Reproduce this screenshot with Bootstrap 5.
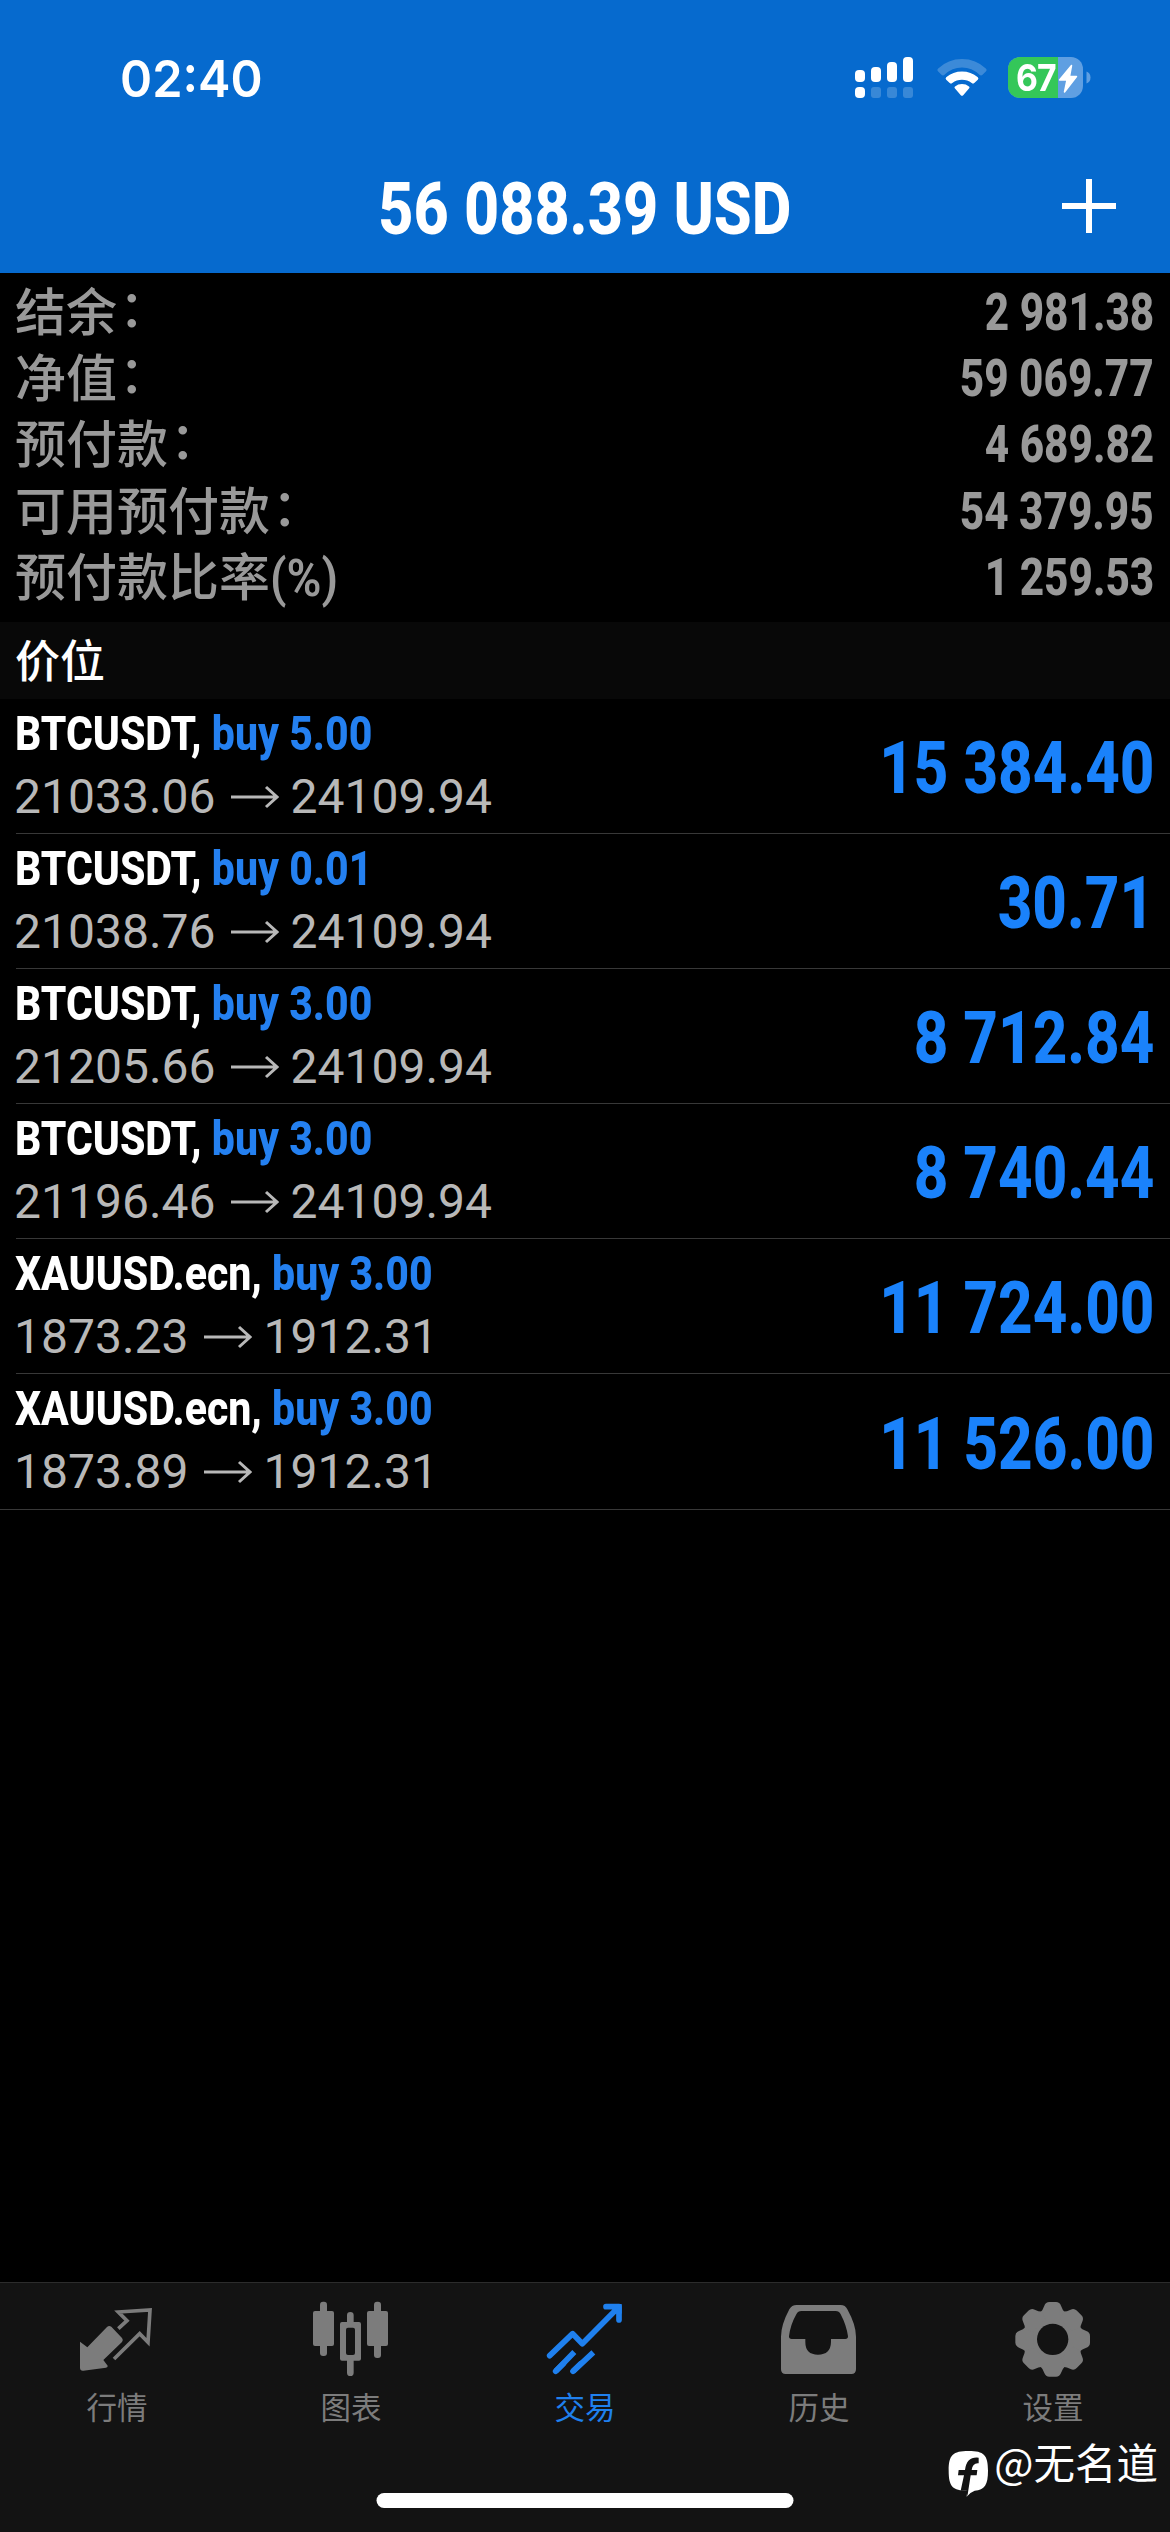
<!DOCTYPE html>
<html lang="zh-CN">
<head>
<meta charset="utf-8">
<meta name="viewport" content="width=device-width, initial-scale=1">
<title>交易</title>
<link href="https://cdn.jsdelivr.net/npm/bootstrap@5.3.0/dist/css/bootstrap.min.css" rel="stylesheet">
<style>
body{background:#000;color:#fff;font-family:Roboto,"Noto Sans CJK SC",sans-serif;overflow:hidden}
.screen{width:1170px;height:2532px}
svg{display:block;flex:none}
.topbar{background:#066ace;height:273px}
.statusbar{height:156px;padding:0 79px 0 120px}
.clock{font:600 51px/1 Inter,sans-serif;transform:scaleX(.955);transform-origin:left}
.charge{left:8px;top:0;font:700 37.5px/42px Inter,sans-serif;letter-spacing:-1px;transform:scaleX(.9);transform-origin:left}
.titlebar{height:104px}
.squeeze{display:inline-block;white-space:pre;font-weight:800}
.balance-title{font-size:73px;line-height:106px;transform:scaleX(.837)}
.add-btn{right:51px;top:20px}
.summary{padding:5px 16px 0 15px;height:349px;color:#999}
.sum-line{height:66.2px;font-size:51px;line-height:66.2px}
.sum-label{font-family:"Noto Sans CJK SC",sans-serif;font-weight:500;line-height:62px}
.sum-label .squeeze{font-family:Roboto,sans-serif;font-size:51px;font-weight:600;line-height:50px;transform:scaleX(.93);transform-origin:left}
.colon{position:relative;left:2px;top:-4px}
.sum-value{transform:scaleX(.83);transform-origin:right;line-height:69px}
.section-head{background:#080808;height:77px;padding-left:15px;font:500 45px/74px "Noto Sans CJK SC",sans-serif}
.deal{margin-left:16px;padding-right:16px;height:135px;border-bottom:1px solid #383838}
.deal:last-child{margin-left:0;padding-left:16px;height:136px}
.deal-name{font-size:49px;line-height:62px;height:62px;margin:4px 0 0 -1px;transform:scaleX(.837);transform-origin:left}
.deal-side{color:#2480f0}
.deal-price{font-size:48px;line-height:64px;color:#b8b8b8;font-weight:400;margin-left:-2px}
.deal-price svg{margin:0 12px 0 15px}
.deal-profit{font-size:73px;line-height:1;color:#1a82fb;transform:scaleX(.823);transform-origin:right;margin-top:5px}
.tabbar{background:#131313;border-top:1px solid #2c2c2c;height:250px;color:#7c7c7c}
.tab-item{padding-top:15px;font:400 30.5px/44px "Noto Sans CJK SC",sans-serif;color:#7c7c7c}
.tab-item.active{color:#1f80ee}
.tab-item span{margin-top:6px}
.home-bar{width:417px;height:15px;bottom:24px;background:#fff}
.watermark{right:12px;bottom:34px;font:400 41.5px/60px "Noto Sans CJK SC",sans-serif}
.watermark span{margin-top:-26px}
</style>
<script src="https://cdn.jsdelivr.net/npm/bootstrap@5.3.0/dist/js/bootstrap.bundle.min.js"></script>
</head>
<body>
<div class="screen d-flex flex-column position-relative mx-auto">
  <header class="topbar">
    <div class="statusbar d-flex justify-content-between align-items-center">
      <div class="clock">02:40</div>
      <div class="d-flex align-items-center">
        <svg width="58" height="42" viewBox="0 0 58 42" fill="#fff"><rect y="13" width="10" height="12" rx="4"/><rect x="16" y="10" width="10" height="15" rx="4"/><rect x="32" y="5" width="10" height="20" rx="4"/><rect x="48" width="10" height="25" rx="4"/><rect y="30" width="10" height="11" rx="4"/><g opacity=".2"><rect x="16" y="30" width="10" height="11" rx="3"/><rect x="32" y="30" width="10" height="11" rx="3"/><rect x="48" y="30" width="10" height="11" rx="3"/></g></svg>
        <svg class="ms-4" width="50" height="42" viewBox="0 0 50 42" fill="#fff"><path opacity=".22" d="M1.2 14.6Q-.4 13 1.2 11.500Q11 2 25 2T48.800 11.500Q50.400 13 48.800 14.600L45.500 17.800Q44 19 42.500 17.800Q35 10.500 25 10.500T7.500 17.800Q6 19 4.500 17.800Z"/><path d="M9.200 22.700Q8 21.400 9.200 20.200Q16 14.500 25 14.500T40.800 20.200Q42 21.400 40.800 22.700L37.300 26Q36 27 34.700 26Q30.500 22.700 25 22.700T15.300 26Q14 27 12.700 26Z"/><path d="M17.800 31.200Q17 30.200 18 29.400Q21 27 25 27T32 29.400Q33 30.200 32.200 31.200L26.200 38.200Q25 39.400 23.800 38.200Z"/></svg>
        <div class="position-relative" style="margin-left:21px">
          <svg width="83" height="42" viewBox="0 0 83 42"><clipPath id="cell"><rect width="75" height="41" rx="12"/></clipPath><g clip-path="url(#cell)"><path fill="#5f9fe2" d="M0 0h75v41H0z"/><path fill="#34c759" d="M0 0h50v41H0z"/></g><path fill="#5f9fe2" d="M78.500 14.500q4 1.500 4 6t-4 6z"/><path fill="#fff" stroke="#fff" stroke-linejoin="round" stroke-width="1.500" d="M63.500 8.500L51.500 23H59L56.500 35L68.500 19.500H61.500Z"/></svg>
          <span class="charge position-absolute">67</span>
        </div>
      </div>
    </div>
    <div class="titlebar position-relative text-center">
      <span class="squeeze balance-title">56 088.39 USD</span>
      <svg class="add-btn position-absolute" width="60" height="60" viewBox="0 0 60 60" stroke="#fff" stroke-width="6"><path d="M30 3v54M3 30h54"/></svg>
    </div>
  </header>

  <section class="summary">
    <div class="sum-line d-flex justify-content-between"><span class="sum-label">结余<span class="colon">：</span></span><span class="squeeze sum-value">2 981.38</span></div>
    <div class="sum-line d-flex justify-content-between"><span class="sum-label">净值<span class="colon">：</span></span><span class="squeeze sum-value">59 069.77</span></div>
    <div class="sum-line d-flex justify-content-between"><span class="sum-label">预付款<span class="colon">：</span></span><span class="squeeze sum-value">4 689.82</span></div>
    <div class="sum-line d-flex justify-content-between"><span class="sum-label">可用预付款<span class="colon">：</span></span><span class="squeeze sum-value">54 379.95</span></div>
    <div class="sum-line d-flex justify-content-between"><span class="sum-label">预付款比率<span class="squeeze">(%)</span></span><span class="squeeze sum-value">1 259.53</span></div>
  </section>

  <div class="section-head">价位</div>
  <main class="flex-grow-1">
    <div class="deal d-flex justify-content-between align-items-center">
      <div class="align-self-start"><div class="squeeze deal-name">BTCUSDT, <span class="deal-side">buy 5.00</span></div><div class="deal-price d-flex align-items-center">21033.06<svg width="48" height="24" viewBox="0 0 48 24" fill="none" stroke="currentColor" stroke-width="3"><path d="M0 12h45M35 2l11 10-11 10"/></svg>24109.94</div></div>
      <div class="squeeze deal-profit">15 384.40</div>
    </div>
    <div class="deal d-flex justify-content-between align-items-center">
      <div class="align-self-start"><div class="squeeze deal-name">BTCUSDT, <span class="deal-side">buy 0.01</span></div><div class="deal-price d-flex align-items-center">21038.76<svg width="48" height="24" viewBox="0 0 48 24" fill="none" stroke="currentColor" stroke-width="3"><path d="M0 12h45M35 2l11 10-11 10"/></svg>24109.94</div></div>
      <div class="squeeze deal-profit">30.71</div>
    </div>
    <div class="deal d-flex justify-content-between align-items-center">
      <div class="align-self-start"><div class="squeeze deal-name">BTCUSDT, <span class="deal-side">buy 3.00</span></div><div class="deal-price d-flex align-items-center">21205.66<svg width="48" height="24" viewBox="0 0 48 24" fill="none" stroke="currentColor" stroke-width="3"><path d="M0 12h45M35 2l11 10-11 10"/></svg>24109.94</div></div>
      <div class="squeeze deal-profit">8 712.84</div>
    </div>
    <div class="deal d-flex justify-content-between align-items-center">
      <div class="align-self-start"><div class="squeeze deal-name">BTCUSDT, <span class="deal-side">buy 3.00</span></div><div class="deal-price d-flex align-items-center">21196.46<svg width="48" height="24" viewBox="0 0 48 24" fill="none" stroke="currentColor" stroke-width="3"><path d="M0 12h45M35 2l11 10-11 10"/></svg>24109.94</div></div>
      <div class="squeeze deal-profit">8 740.44</div>
    </div>
    <div class="deal d-flex justify-content-between align-items-center">
      <div class="align-self-start"><div class="squeeze deal-name">XAUUSD.ecn, <span class="deal-side">buy 3.00</span></div><div class="deal-price d-flex align-items-center">1873.23<svg width="48" height="24" viewBox="0 0 48 24" fill="none" stroke="currentColor" stroke-width="3"><path d="M0 12h45M35 2l11 10-11 10"/></svg>1912.31</div></div>
      <div class="squeeze deal-profit">11 724.00</div>
    </div>
    <div class="deal d-flex justify-content-between align-items-center">
      <div class="align-self-start"><div class="squeeze deal-name">XAUUSD.ecn, <span class="deal-side">buy 3.00</span></div><div class="deal-price d-flex align-items-center">1873.89<svg width="48" height="24" viewBox="0 0 48 24" fill="none" stroke="currentColor" stroke-width="3"><path d="M0 12h45M35 2l11 10-11 10"/></svg>1912.31</div></div>
      <div class="squeeze deal-profit">11 526.00</div>
    </div>
  </main>

  <nav class="tabbar row g-0 row-cols-5">
    <div class="tab-item d-flex flex-column align-items-center">
      <svg width="80" height="80" viewBox="231 84 240 240" fill="currentColor"><path d="M240 215L262 232L321 171Q327 165 334 170L366 204Q371 210 366 216L310 270L323 287Q324 291 318 293L250 302Q240 303 240 293Z"/><path fill="none" stroke="currentColor" stroke-width="11" d="M355 176L381 152L355 126L450 120L444 217L419 191L342 267"/></svg><span>行情</span>
    </div>
    <div class="tab-item d-flex flex-column align-items-center">
      <svg width="80" height="80" viewBox="933 84 240 240" fill="currentColor"><rect x="939" y="123" width="63" height="105" rx="6"/><rect x="960" y="95" width="21" height="163" rx="9"/><rect x="1101" y="123" width="63" height="105" rx="6"/><rect x="1122" y="95" width="21" height="169" rx="9"/><path fill-rule="evenodd" d="M1026 156h15V136q0-10 10-10t10 10v20h16q6 0 6 6V266q0 6-6 6h-16V308q0 10-10 10t-10-10V272h-15q-6 0-6-6V162q0-6 6-6ZM1044 173q-6 0-6 6v70q0 6 6 6h15q6 0 6-6V179q0-6-6-6Z"/></svg><span>图表</span>
    </div>
    <div class="tab-item active d-flex flex-column align-items-center">
      <svg width="80" height="80" viewBox="285 84 240 240" fill="none" stroke="currentColor" stroke-width="17"><path stroke-linecap="round" stroke-linejoin="round" d="M299 257L368 191L397 221L504 113M468 110H507V150"/><path stroke-linecap="round" d="M317 304L340 281M369 304L392 281"/><path d="M317 304L373 246M369 304L430 247"/><path fill="currentColor" stroke="none" d="M490 102H515V132Z"/></svg><span>交易</span>
    </div>
    <div class="tab-item d-flex flex-column align-items-center">
      <svg width="80" height="80" viewBox="987 84 240 240" fill="currentColor" fill-rule="evenodd"><path d="M1040 105H1172Q1186 105 1192 118Q1218 165 1218 200V298Q1218 312 1204 312H1007Q993 312 993 298V200Q993 165 1018 118Q1025 105 1040 105ZM1054 123Q1044 123 1039 133Q1021 165 1017 199Q1017 207 1025 207H1066V216Q1066 254 1104 254T1143 216V207H1186Q1194 207 1194 199Q1189 165 1172 133Q1167 123 1157 123Z"/></svg><span>历史</span>
    </div>
    <div class="tab-item d-flex flex-column align-items-center">
      <svg width="80" height="80" viewBox="399 84 240 240" fill="currentColor"><mask id="hub"><path fill="#fff" d="M399 84h240v240H399z"/><circle cx="518" cy="208" r="47" fill="#000"/></mask><g mask="url(#hub)"><circle cx="518" cy="208" r="89"/><g id="teeth"><path id="tooth" d="M482 126Q488 121 493 107Q497 96 508 96H528Q539 96 543 107Q548 121 554 126L545 150H491Z"/><use href="#tooth" transform="rotate(45 518 208)"/><use href="#tooth" transform="rotate(90 518 208)"/><use href="#tooth" transform="rotate(135 518 208)"/></g><use href="#teeth" transform="rotate(180 518 208)"/></g></svg><span>设置</span>
    </div>
  </nav>
  <div class="watermark position-absolute d-flex align-items-center">
    <svg class="me-1" width="42" height="48" viewBox="204 528 126 144"><path fill="#fff" d="M266 531C312 531 324 543 324 590C324 632 314 648 284 650Q270 655 260 668L262 650C218 650 206 637 206 590C206 543 218 531 266 531Z"/><path fill="#131313" d="M296 551V568Q278 566 275 588H292L290 604H272L262 668L260 650H242L252 604H234L236 588H255Q260 547 296 551Z"/></svg>
    <span>@无名道</span>
  </div>
  <div class="home-bar position-absolute start-50 translate-middle-x rounded-pill"></div>
</div>
</body>
</html>
